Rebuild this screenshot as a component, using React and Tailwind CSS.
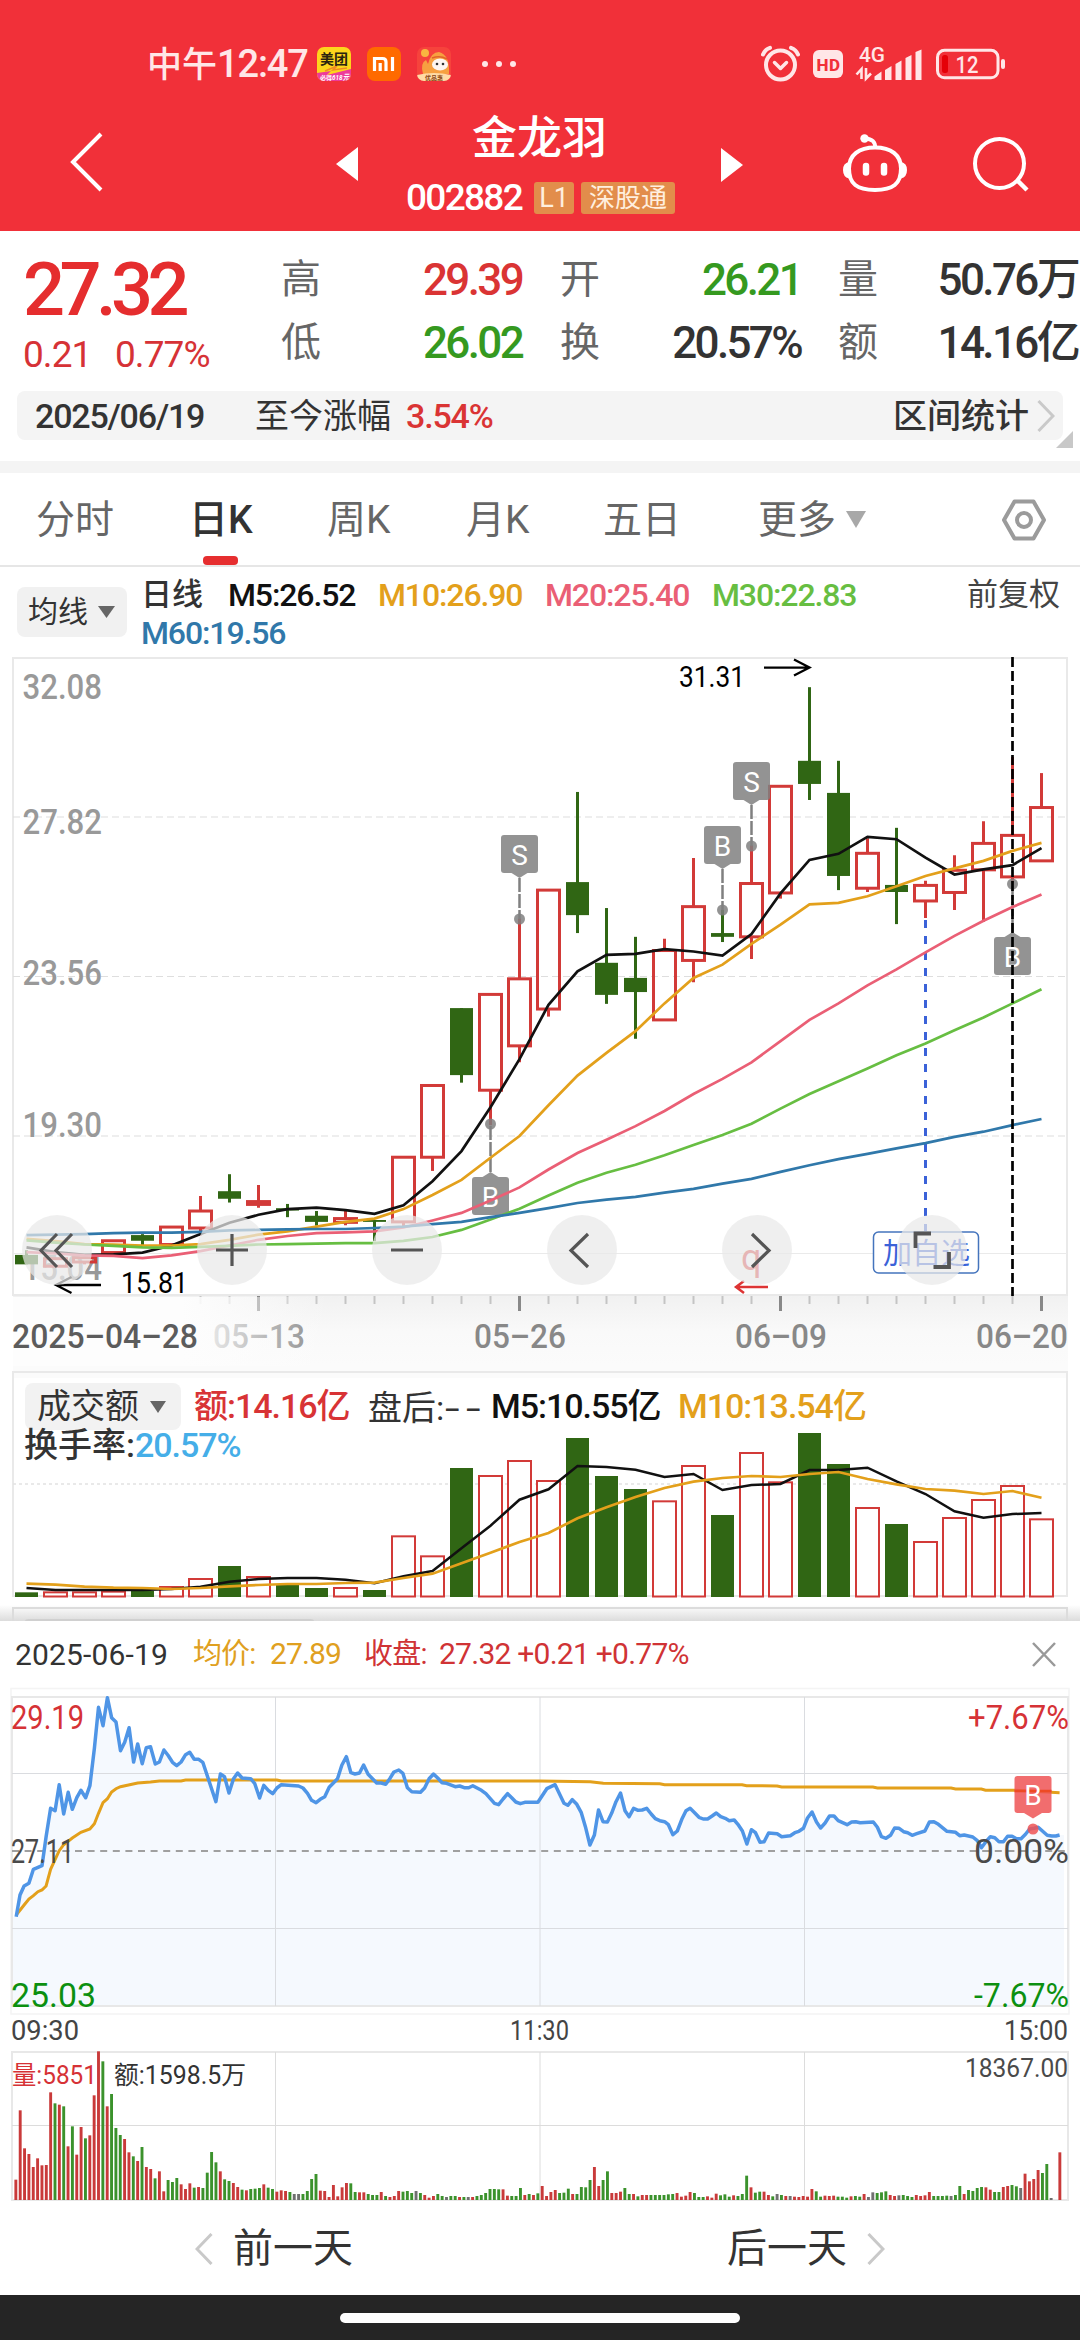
const FONT = "font-['Roboto','Noto_Sans_CJK_SC',sans-serif]";

// Daily candles: [colour, open/close top, bottom, high, low]
const candles = [
  ['g', 1303, 1323, 1293, 1323], ['r', 1311, 1327, 1311, 1327], ['r', 1309, 1318, 1309, 1323],
  ['r', 1273, 1298, 1273, 1298], ['g', 1261, 1273, 1259, 1283], ['r', 1244, 1281, 1244, 1281],
  ['r', 1210, 1246, 1178, 1262], ['g', 1168, 1184, 1132, 1192], ['r', 1190, 1196, 1155, 1203],
  ['g', 1204, 1209, 1195, 1223], ['g', 1220, 1233, 1210, 1241], ['r', 1226, 1234, 1210, 1240],
  ['g', 1229, 1233, 1229, 1274], ['r', 1096, 1233, 1096, 1243], ['r', 944, 1096, 944, 1125],
  ['g', 780, 922, 780, 938], ['r', 751, 954, 751, 1028], ['r', 718, 860, 590, 895],
  ['r', 530, 782, 530, 798], ['g', 513, 583, 322, 621], ['g', 684, 752, 568, 771],
  ['g', 716, 746, 629, 845], ['r', 658, 805, 633, 805], ['r', 565, 679, 462, 725],
  ['g', 621, 629, 572, 640], ['r', 516, 629, 435, 676], ['r', 310, 536, 310, 548],
  ['g', 256, 305, 100, 339], ['g', 324, 500, 256, 530], ['r', 452, 526, 420, 534],
  ['g', 519, 534, 398, 602], ['r', 520, 553, 510, 589], ['r', 488, 535, 456, 572],
  ['r', 431, 487, 384, 597], ['r', 414, 502, 248, 515], ['r', 355, 468, 282, 468],
];

const averages = [
  ['#111111', [1287, 1297, 1303, 1302, 1298, 1283, 1259, 1235, 1218, 1206, 1203, 1208, 1216, 1198, 1147, 1083, 990, 888, 773, 702, 667, 665, 655, 660, 669, 623, 537, 466, 453, 417, 422, 461, 497, 486, 477, 441]],
  ['#e3a01b', [1269, 1274, 1280, 1281, 1283, 1283, 1280, 1271, 1260, 1253, 1243, 1233, 1226, 1206, 1176, 1144, 1097, 1051, 986, 923, 875, 829, 770, 716, 688, 644, 603, 560, 557, 543, 522, 500, 484, 468, 447, 430]],
  ['#ea5f75', [1297, 1300, 1304, 1305, 1310, 1304, 1295, 1283, 1271, 1263, 1257, 1255, 1253, 1245, 1230, 1214, 1188, 1160, 1122, 1087, 1059, 1030, 998, 962, 930, 895, 850, 805, 770, 732, 698, 662, 627, 595, 566, 539]],
  ['#67be42', [1272, 1277, 1281, 1284, 1287, 1288, 1286, 1284, 1281, 1280, 1279, 1278, 1278, 1273, 1265, 1250, 1228, 1205, 1177, 1150, 1129, 1112, 1092, 1070, 1049, 1025, 993, 962, 935, 908, 880, 855, 827, 800, 770, 740]],
  ['#3078aa', [1261, 1260, 1259, 1257, 1256, 1256, 1254, 1251, 1250, 1249, 1248, 1248, 1246, 1243, 1238, 1233, 1223, 1214, 1204, 1193, 1186, 1180, 1171, 1163, 1152, 1142, 1127, 1113, 1100, 1089, 1077, 1066, 1053, 1042, 1028, 1015]],
];

const turnover = [697, 697, 697, 695, 693, 681, 657, 618, 651, 675, 684, 684, 690, 529, 589, 324, 348, 303, 363, 234, 348, 387, 424, 318, 465, 279, 367, 219, 312, 444, 492, 546, 474, 420, 378, 478];
const turnoverM5 = [684, 690, 690, 690, 690, 687, 680, 665, 657, 654, 654, 659, 670, 649, 633, 565, 497, 419, 388, 318, 321, 329, 351, 342, 390, 375, 372, 330, 330, 323, 364, 402, 454, 473, 462, 459];
const turnoverM10 = [671, 674, 680, 683, 684, 687, 684, 679, 675, 672, 672, 669, 668, 654, 641, 610, 578, 546, 519, 475, 442, 411, 384, 365, 354, 348, 351, 342, 336, 357, 373, 387, 392, 402, 393, 413];

const minutePrice = '47,920 58,855 70,828 84,820 97,778 122,767 134,680 147,595 160,602 172,524 185,612 198,547 210,598 223,563 235,541 249,563 261,527 274,415 286,292 299,347 312,263 324,323 337,336 350,422 362,397 375,353 388,456 400,402 413,461 425,413 437,410 451,462 463,456 476,420 488,436 501,457 513,467 526,456 539,434 551,427 564,448 577,448 589,457 627,575 640,492 652,500 665,549 678,506 690,489 703,504 728,506 740,521 754,564 766,526 779,541 792,551 804,534 817,524 867,528 880,534 893,550 905,571 918,578 930,568 943,560 956,532 980,506 993,465 1006,440 1019,488 1031,492 1044,489 1056,465 1069,493 1094,519 1107,519 1120,523 1132,506 1144,486 1158,480 1170,490 1183,533 1196,545 1221,547 1233,534 1246,506 1259,492 1271,504 1284,518 1297,520 1322,530 1335,528 1348,533 1361,533 1373,527 1398,541 1411,551 1436,580 1448,584 1461,567 1474,551 1486,563 1498,576 1511,581 1524,577 1562,577 1588,536 1612,524 1638,580 1649,586 1662,569 1675,583 1688,608 1700,650 1713,705 1726,675 1738,600 1751,635 1764,636 1776,610 1789,575 1802,549 1815,602 1827,620 1840,595 1853,601 1865,600 1878,595 1891,612 1903,626 1916,632 1930,635 1941,644 1954,674 1967,663 1980,628 1992,602 2004,595 2017,608 2030,622 2042,627 2055,627 2068,618 2080,609 2093,620 2106,625 2118,632 2132,630 2143,643 2156,663 2169,702 2182,659 2194,668 2207,697 2219,695 2232,669 2257,671 2270,680 2295,677 2308,668 2320,664 2333,655 2345,624 2358,606 2371,636 2383,654 2396,639 2409,618 2422,618 2434,632 2460,644 2473,636 2485,635 2498,638 2536,636 2548,652 2560,680 2573,685 2586,676 2598,654 2611,655 2624,665 2636,668 2649,676 2662,671 2686,663 2699,636 2712,635 2725,643 2750,664 2775,667 2787,677 2800,675 2825,681 2838,692 2850,713 2863,695 2876,680 2889,683 2901,695 2914,695 2926,679 2939,679 2952,686 2965,686 2978,673 2990,657 3003,655 3015,652 3028,664 3041,676 3054,678 3066,678 3077,675';
const minuteAverage = '47,915 70,885 84,867 97,857 110,845 122,840 134,828 147,778 172,722 185,704 210,684 235,667 261,657 274,641 286,610 299,578 312,566 324,546 337,536 350,530 400,519 437,516 463,513 526,513 539,510 804,510 817,513 1568,513 1714,515 1752,520 1916,521 1930,524 2155,524 2168,527 2257,528 2270,531 2535,531 2548,534 2762,534 2775,537 2850,537 2862,541 2950,541 3000,544 3077,548';

const minuteVolume = 'r479 r271 r385 r402 r441 r415 r436 r435 r217 g250 r254 g259 r379 g319 r404 r321 g355 r346 r226 r94 g124 r259 g222 g324 g345 r357 r397 g409 r423 g381 r441 r447 g475 r454 r514 g480 g486 g474 r493 r507 r490 g503 r501 g504 g458 g396 g427 r454 g478 g483 r489 r501 g509 r511 g507 g506 g504 r493 g503 g507 r515 r511 r513 g516 k522 k522 g522 g513 g477 g462 r512 r513 r531 r495 r529 r502 r489 g490 g516 r517 r517 g522 g525 g525 r516 g528 r531 r528 r513 g515 g513 g519 k513 g519 r525 r533 r528 g522 g528 k531 g528 g528 r531 g531 k531 r531 g528 g525 g519 g507 g507 g508 r508 r527 g528 g528 g504 r525 g522 r525 g520 r498 r528 r516 r510 g519 g518 g506 r522 g522 g501 g502 g480 r441 r498 g480 g454 r519 r519 r515 g504 g522 r522 g529 r525 r525 g525 g525 g525 g525 g523 g522 r519 r530 r527 r516 g519 g531 g531 r529 r533 r521 g526 g523 g530 r526 g528 g522 g467 r502 g518 g515 r515 r525 g529 k522 g525 r528 k528 r530 r531 r528 r530 r507 g514 g530 r527 r528 r527 g530 g530 g533 r529 g528 g530 r522 k531 k517 g519 g517 g514 r525 r528 k526 g525 g528 g531 r525 r528 r526 r516 g528 g528 g528 g527 k528 g525 g498 r522 g510 g513 g504 g501 r502 r509 g516 g516 r501 r498 g495 g499 k504 r461 r484 r477 r450 g459 g432 k534 k540 r397'.split(' ');

const dayX = (i) => 26.5 + i * 29;
const dayY = (v) => 640 + v / 2.119;
const volY = (v) => 1360 + v / 3;
const line = (values, toY) => values.map((v, i) => `${dayX(i)},${toY(v).toFixed(1)}`).join(' ');
const minuteLine = (text) =>
  text
    .split(' ')
    .map((p) => p.split(',').map(Number))
    .map(([x, y]) => `${(x / 2.904).toFixed(1)},${(1610 + y / 3).toFixed(1)}`)
    .join(' ');

const Caret = ({ className }) => (
  <svg viewBox="0 0 18 12" preserveAspectRatio="none" className={className}>
    <path d="M0 0H18L9 12Z" fill="currentColor" />
  </svg>
);

const Label = ({ x, y, w, size, fill, weight = 400, children }) => (
  <text x={x} y={y} textLength={w} lengthAdjust="spacingAndGlyphs" fontSize={size} fill={fill} fontWeight={weight}>
    {children}
  </text>
);

function StatusBar() {
  return (
    <div className="flex h-[100px] items-center pt-7 pl-[147px] text-[#ffe6e7]">
      <div className="w-[170px] whitespace-nowrap text-[35px] font-medium leading-none">
        中午<span className="text-[38px] tracking-[-0.03em]">12:47</span>
      </div>
      <svg viewBox="0 0 34 34" className="h-[34px] w-[34px]">
        <defs>
          <clipPath id="appMask"><rect width="34" height="34" rx="7" /></clipPath>
        </defs>
        <g clipPath="url(#appMask)">
          <rect width="34" height="34" fill="#fdd51c" />
          <path d="M0 26L14 24L10 28L34 22V34H0Z" fill="#ee3a9a" />
          <path d="M8 24L20 19L16 23L30 21" fill="none" stroke="#f08a24" strokeWidth="1.5" />
          <text x="3" y="16.5" fontSize="14" fontWeight="700" fill="#2b2410">美团</text>
          <text x="3" y="33" fontSize="6" fontWeight="700" fill="#fff">必得</text>
          <text x="15" y="33" fontSize="8" fontWeight="700" fontStyle="italic" fill="#fff" textLength="17" lengthAdjust="spacingAndGlyphs">618元</text>
        </g>
      </svg>
      <svg viewBox="0 0 34 34" className="ml-4 h-[34px] w-[34px]">
        <rect width="34" height="34" rx="8" fill="#ff6a00" />
        <path d="M7.5 24V11.5H15.5Q19 11.5 19 15V24M13.2 16V24M25.5 10V24" fill="none" stroke="#fff" strokeWidth="3.2" />
      </svg>
      <svg viewBox="0 0 34 34" className="ml-4 h-[34px] w-[34px]">
        <g clipPath="url(#appMask)">
          <rect width="34" height="34" fill="#f6433c" />
          <path d="M6 27Q3 16 9 13L11 17Q14 5 22 5Q33 8 32 27Z" fill="#f7a040" />
          <circle cx="8" cy="6" r="4" fill="#f9b640" />
          <path d="M15 11Q23 8 30 12" fill="none" stroke="#e2622a" strokeWidth="1.5" />
          <ellipse cx="23" cy="17.5" rx="8" ry="6" fill="#fdf6f2" />
          <circle cx="20" cy="17" r="1.3" fill="#333" />
          <circle cx="26" cy="17" r="1.3" fill="#333" />
          <path d="M0 28Q17 24 34 28V34H0Z" fill="#ffdba6" />
          <text x="8" y="32.5" fontSize="6" fontWeight="700" fill="#8c4a17">优品惠</text>
        </g>
      </svg>
      <div className="ml-[31px] flex gap-2">
        <i className="h-[6px] w-[6px] rounded-full bg-[#ffe6e7]" />
        <i className="h-[6px] w-[6px] rounded-full bg-[#ffe6e7]" />
        <i className="h-[6px] w-[6px] rounded-full bg-[#ffe6e7]" />
      </div>
      <svg viewBox="760 44 246 40" className="ml-[245px] h-10 w-[246px]" fill="none" stroke="#ffe6e7">
        <circle cx="779.5" cy="65" r="14.5" strokeWidth="4" />
        <path d="M773.5 62.5L779.5 68.5L785.5 62.5" strokeWidth="3.5" strokeLinejoin="round" strokeLinecap="round" />
        <path d="M762 54.5Q764 49.5 769 47.8M797 54.5Q795 49.5 790 47.8" strokeWidth="4" strokeLinecap="round" />
        <rect x="812" y="50" width="30" height="28" rx="6" fill="#ffe6e7" stroke="none" />
        <text x="815.5" y="70.5" fontSize="17" fontWeight="800" fill="#f13039" stroke="none" textLength="23.5">HD</text>
        <text x="858" y="62" fontSize="20" fontWeight="500" fill="#ffe6e7" stroke="none" textLength="26" lengthAdjust="spacingAndGlyphs">4G</text>
        <path d="M860.5 79V69L855.5 74.5M865 68V78.5L870 73.5" strokeWidth="2.6" />
        <path d="M873.5 80V76.5L880.5 71.5V80ZM884 80V70L890.5 66V80ZM894.5 80V64L900.5 60.5V80ZM904.5 80V58L910.5 55V80ZM914.5 80V52L920.5 49.5V80Z" fill="#ffe6e7" stroke="none" />
        <rect x="936.5" y="50.3" width="60.5" height="27.5" rx="7" strokeWidth="3" />
        <rect x="941" y="55" width="6" height="18" rx="2.5" fill="#e50008" stroke="none" />
        <rect x="1000" y="59" width="4" height="10" rx="2" fill="#ffe6e7" stroke="none" />
        <text x="954.5" y="73" fontSize="24" fontWeight="500" fill="#ffe6e7" stroke="none" textLength="23" lengthAdjust="spacingAndGlyphs">12</text>
      </svg>
    </div>
  );
}

function NavBar() {
  return (
    <div className="flex h-[131px] pl-[70px] text-white">
      <svg viewBox="0 0 33 60" className="mt-8 h-[60px] w-[33px]">
        <path d="M31 2L3 30L31 58" fill="none" stroke="#fff" strokeWidth="4" />
      </svg>
      <svg viewBox="0 0 22 34" className="mt-[47px] ml-[233px] h-[34px] w-[22px]">
        <path d="M22 0V34L0 17Z" fill="#fff" />
      </svg>
      <div className="flex w-[363px] flex-col items-center pt-[17px]">
        <h1 className="text-[45px] font-medium leading-[44px]">金龙羽</h1>
        <div className="mt-[21px] ml-[2px] flex h-8 items-center gap-[7px]">
          <span className="mr-[5px] text-[37px] font-medium leading-8 tracking-[-0.045em]">002882</span>
          <span className="h-8 w-10 rounded-[3px] bg-[#e28d4b] text-center text-[27px] leading-8 text-[#ffefdf]">L1</span>
          <span className="h-8 w-[94px] rounded-[3px] bg-[#e28d4b] text-center text-[26px] leading-8 text-[#ffefdf]">深股通</span>
        </div>
      </div>
      <svg viewBox="0 0 22 34" className="mt-[48px] h-[34px] w-[22px]">
        <path d="M0 0V34L22 17Z" fill="#fff" />
      </svg>
      <svg viewBox="0 0 64 60" className="mt-[34px] ml-[100px] h-[60px] w-16" fill="none" stroke="#fff" strokeWidth="4">
        <path d="M32 13.5C48 13.5 58 21 58 34.5C58 50 50 56 32 56C14 56 6 50 6 34.5C6 21 16 13.5 32 13.5Z" />
        <path d="M32 14Q33 5 22 4.5" />
        <circle cx="21.5" cy="4.5" r="4.2" fill="#fff" stroke="none" />
        <path d="M6 28Q0 29 0 36T6 44.5ZM58 28Q64 29 64 36T58 44.5Z" fill="#fff" stroke="none" />
        <path d="M23 32V38.5M41 32V38.5" strokeWidth="6.5" strokeLinecap="round" />
      </svg>
      <svg viewBox="0 0 56 56" className="mt-[37px] ml-[66px] h-14 w-14" fill="none" stroke="#fff" strokeWidth="4">
        <circle cx="26.5" cy="26.5" r="24.5" />
        <path d="M44 43L54 53" strokeWidth="4.5" />
      </svg>
    </div>
  );
}

const Quote = ({ label, value, color, width }) => (
  <div className={`flex h-[63px] items-center justify-between whitespace-nowrap ${width}`}>
    <span className="text-[40px] text-[#666]">{label}</span>
    <span className={`text-[44px] font-medium tracking-[-0.06em] ${color}`}>{value}</span>
  </div>
);

function QuotePanel() {
  return (
    <div className="h-[230px] pt-[17px]">
      <div className="flex h-[143px]">
        <div className="w-[281px] pl-[23px]">
          <div className="h-[84px] text-[74px] font-medium leading-[84px] tracking-[-0.075em] text-[#e52d2e]">27.32</div>
          <div className="flex text-[37px] leading-[45px] tracking-[-0.025em] text-[#d63236]">
            <span className="w-[92px]">0.21</span>
            <span>0.77%</span>
          </div>
        </div>
        <div className="flex gap-[37px]">
          <div>
            <Quote label="高" value="29.39" color="text-[#da3434]" width="w-[241px]" />
            <Quote label="低" value="26.02" color="text-[#35991f]" width="w-[241px]" />
          </div>
          <div className="ml-px">
            <Quote label="开" value="26.21" color="text-[#35991f]" width="w-[241px]" />
            <Quote label="换" value="20.57%" color="text-[#333]" width="w-[241px]" />
          </div>
          <div>
            <Quote label="量" value="50.76万" color="text-[#333]" width="w-[240px]" />
            <Quote label="额" value="14.16亿" color="text-[#333]" width="w-[240px]" />
          </div>
        </div>
      </div>
      <div className="relative mx-[17px] flex h-[49px] items-center rounded-lg bg-[#f4f4f4] pr-2 pl-[18px] text-[34px] leading-none text-[#333]">
        <span className="w-[220px] font-medium tracking-[-0.035em]">2025/06/19</span>
        <span className="w-[151px]">至今涨幅</span>
        <span className="font-medium tracking-[-0.035em] text-[#da3434]">3.54%</span>
        <span className="ml-auto font-medium">区间统计</span>
        <svg viewBox="0 0 18 34" className="ml-2 h-[34px] w-[18px]">
          <path d="M1.5 2L16 17L1.5 32" fill="none" stroke="#c9c9c9" strokeWidth="3" />
        </svg>
        <svg viewBox="0 0 17 17" className="absolute top-10 -right-[10px] h-[17px] w-[17px]">
          <path d="M17 0V17H0Z" fill="#c8c8c8" />
        </svg>
      </div>
    </div>
  );
}

function Tabs() {
  return (
    <div className="flex h-[106px] border-t-[12px] border-b-2 border-t-[#f4f4f4] border-b-[#e6e6e6] pl-9 text-[39px] leading-[94px] text-[#666]">
      <span className="w-[153px]">分时</span>
      <span className="relative w-[138px] font-medium text-[#333]">
        日K
        <i className="absolute bottom-0 left-[14px] h-[9px] w-[35px] rounded-[4px] bg-[#e62e2f]" />
      </span>
      <span className="w-[139px]">周K</span>
      <span className="w-[137px]">月K</span>
      <span className="w-[155px]">五日</span>
      <span className="w-[88px]">更多</span>
      <Caret className="mt-[38px] h-[17px] w-5 text-[#a8a8a8]" />
      <svg viewBox="0 0 46 42" className="mt-[26px] ml-[135px] h-[42px] w-[46px]" fill="none" stroke="#9b9b9b" strokeWidth="4">
        <path d="M13.5 2.500H32.500L43 21L32.500 39.500H13.500L3 21Z" strokeLinejoin="round" />
        <circle cx="23" cy="21" r="7" />
      </svg>
    </div>
  );
}

function AverageLegend() {
  return (
    <div className="flex h-[84px] pt-[9px] pl-[17px] text-[32px] font-medium leading-[38px] text-[#333]">
      <div className="mt-[11px] flex h-[50px] w-[110px] items-center rounded-lg bg-[#f1f1f1] pl-[11px] text-[30px] font-normal">
        均线
        <Caret className="ml-[10px] h-3 w-[17px] text-[#666]" />
      </div>
      <div className="ml-[14px] w-[826px] whitespace-nowrap tracking-[-0.035em]">
        <div className="flex">
          <span className="w-[87px] text-[31px] tracking-normal">日线</span>
          <span className="w-[150px] text-[#111]">M5:26.52</span>
          <span className="w-[167px] text-[#e3a01b]">M10:26.90</span>
          <span className="w-[167px] text-[#ea5f75]">M20:25.40</span>
          <span className="text-[#67be42]">M30:22.83</span>
        </div>
        <div className="text-[#3078aa]">M60:19.56</div>
      </div>
      <span className="text-[31px] font-normal text-[#444]">前复权</span>
    </div>
  );
}

// Trade flag with a leader line down (or up) to the candle it belongs to
const TradeFlag = ({ i, boxY, dotY, text }) => {
  const x = dayX(i);
  const below = boxY > dotY;
  const tip = below ? boxY - 5 : boxY + 43;
  const base = below ? boxY : boxY + 38;
  return (
    <g fill="#808080" fillOpacity=".85">
      <path d={`M${x} ${tip}V${dotY}`} stroke="#808080" strokeWidth="2.5" strokeDasharray="14 2" />
      <circle cx={x} cy={dotY} r="5.5" />
      <rect x={x - 18.5} y={boxY} width="37" height="38" rx="3" />
      <path d={`M${x - 8} ${base}H${x + 8}L${x} ${tip}Z`} />
      <text x={x} y={boxY + 29.5} fontSize="28" fill="#fff" fillOpacity="1" textAnchor="middle">{text}</text>
    </g>
  );
};

function DailyChart() {
  return (
    <svg viewBox="0 651 1080 715" className="h-[715px] w-[1080px]">
      <defs>
        <linearGradient id="axisFade" x1="0" x2="1" y1="0" y2="0">
          <stop offset=".16" stopColor="#fdfdfd" />
          <stop offset=".3" stopColor="#fdfdfd" stopOpacity="0" />
        </linearGradient>
        <linearGradient id="axisBack" x1="0" x2="0" y1="0" y2="1">
          <stop offset="0" stopColor="#f1f1f1" />
          <stop offset=".5" stopColor="#f9f9f9" />
          <stop offset="1" stopColor="#fbfbfb" />
        </linearGradient>
      </defs>
      <rect x="13" y="1296" width="1055" height="70" fill="url(#axisBack)" />
      <rect x="13" y="658" width="1054" height="637" fill="#fff" stroke="#e9e9e9" strokeWidth="2" />
      <path d="M13 817H1067M13 976.5H1067M13 1136H1067" stroke="#dedede" strokeWidth="1.2" strokeDasharray="7 4" />
      <path d="M13 1253.5H1067" stroke="#eaeaea" strokeWidth="1.2" />

      <Label x="22.5" y="699" w="79.500" size="35" weight="500" fill="#999">32.08</Label>
      <Label x="22.5" y="834" w="79.500" size="35" weight="500" fill="#999">27.82</Label>
      <Label x="22.5" y="985" w="79.500" size="35" weight="500" fill="#999">23.56</Label>
      <Label x="22.5" y="1137" w="79.500" size="35" weight="500" fill="#999">19.30</Label>
      <Label x="22.5" y="1280" w="79.500" size="35" weight="500" fill="#999">15.04</Label>

      {candles.map(([kind, top, bottom, high, low], i) => {
        const x = dayX(i);
        const [t, b, h, l] = [top, bottom, high, low].map(dayY);
        return kind === 'g' ? (
          <g key={i} fill="#306614">
            <rect x={x - 1.5} y={h} width="3" height={l - h} />
            <rect x={x - 11.5} y={t} width="23" height={b - t} />
          </g>
        ) : (
          <g key={i} fill="none" stroke="#d23a38" strokeWidth="3">
            <path d={`M${x} ${h}V${t}M${x} ${b}V${l}`} />
            <rect x={x - 11} y={t} width="22" height={b - t} />
          </g>
        );
      })}

      <TradeFlag i={17} boxY={835} dotY={919} text="S" />
      <TradeFlag i={16} boxY={1177} dotY={1124} text="B" />
      <TradeFlag i={24} boxY={826} dotY={910} text="B" />
      <TradeFlag i={25} boxY={762} dotY={846} text="S" />
      <TradeFlag i={34} boxY={937} dotY={884} text="B" />

      <path d="M925.5 920V1231" stroke="#3b62d8" strokeWidth="3" strokeDasharray="8 8" />
      {averages.map(([color, values]) => (
        <polyline key={color} points={line(values, dayY)} fill="none" stroke={color} strokeWidth="2.7" />
      ))}
      <path d="M1012.5 657V1296" stroke="#000" strokeWidth="2.700" strokeDasharray="10 4" />

      <g fill="none" stroke="#000" strokeWidth="2.300">
        <path d="M764 667.6H809M794 659.5L809.5 667.6L794 675.5" />
        <path d="M101 1285H57M71.5 1277L56 1285L71.5 1293" />
      </g>
      <Label x="679" y="687" w="66" size="30" fill="#000">31.31</Label>
      <Label x="121" y="1293" w="67" size="30" fill="#000">15.81</Label>

      <rect x="873.5" y="1232" width="105" height="41" rx="5" fill="#fff" stroke="#4474bd" strokeWidth="1.5" />
      <text x="883" y="1264" fontSize="29" fill="#3b62d8">加自选</text>
      <text x="741" y="1270" fontSize="36" fill="#dd3434">q</text>
      <path d="M768 1287H737M744 1281L736 1287L744 1293" fill="none" stroke="#dd3434" strokeWidth="2.5" />

      {[57, 232, 407, 582, 757, 932].map((x) => (
        <circle key={x} cx={x} cy="1250" r="35" fill="#e9e9e9" fillOpacity=".72" />
      ))}
      <g fill="none" stroke="#555" strokeWidth="3.200">
        <path d="M57 1234L41 1250.5L57 1267M72 1234L56 1250.5L72 1267" />
        <path d="M216 1250H248M232 1234V1266M391 1250H423" />
        <path d="M588 1234L571 1250.5L588 1267M752 1234L769 1250.5L752 1267" />
        <path d="M915.5 1248V1233.5H931M933.5 1267H949V1252" strokeWidth="3.800" />
      </g>

      {candles.map((_, i) => {
        if (i < 6) return null;
        const major = i % 9 === 8;
        return <path key={i} d={`M${dayX(i)} 1296V${major ? 1311 : 1304}`} stroke={major ? '#888' : '#c4c4c4'} strokeWidth={major ? 3 : 2} />;
      })}
      <Label x="213" y="1348" w="92" size="34" weight="500" fill="#888">05–13</Label>
      <rect x="13" y="1297" width="1054" height="69" fill="url(#axisFade)" />
      <Label x="12" y="1348" w="186" size="34" weight="500" fill="#5c5c5c">2025–04–28</Label>
      <Label x="474" y="1348" w="92" size="34" weight="500" fill="#888">05–26</Label>
      <Label x="735" y="1348" w="92" size="34" weight="500" fill="#888">06–09</Label>
      <Label x="976" y="1348" w="92" size="34" weight="500" fill="#888">06–20</Label>
    </svg>
  );
}

function TurnoverPanel() {
  return (
    <div className="relative h-[255px] whitespace-nowrap text-[34px] font-medium leading-[39px] text-[#333]">
      <svg viewBox="0 1366 1080 255" className="absolute inset-0 h-[255px] w-[1080px]">
        <defs>
          <linearGradient id="sheetShadow" x1="0" x2="0" y1="0" y2="1">
            <stop offset="0" stopColor="#fff" />
            <stop offset="1" stopColor="#dcdcdc" />
          </linearGradient>
        </defs>
        <rect x="13" y="1366" width="1055" height="12" fill="#fbfbfb" />
        <rect x="13" y="1372" width="1054" height="224" fill="none" stroke="#e9e9e9" strokeWidth="2" />
        <path d="M13 1484H1067" stroke="#e2e2e2" strokeWidth="1.5" strokeDasharray="3 3" />
        {turnover.map((v, i) =>
          candles[i][0] === 'g' ? (
            <rect key={i} x={dayX(i) - 11.5} y={volY(v)} width="23" height={1597 - volY(v)} fill="#306614" />
          ) : (
            <rect key={i} x={dayX(i) - 11.5} y={volY(v)} width="23" height={1596.5 - volY(v)} fill="#fff" stroke="#d23a38" strokeWidth="2" />
          )
        )}
        <polyline points={line(turnoverM5, volY)} fill="none" stroke="#111" strokeWidth="2.5" />
        <polyline points={line(turnoverM10, volY)} fill="none" stroke="#e3a01b" strokeWidth="2.7" />
        <rect x="0" y="1605" width="1080" height="16" fill="url(#sheetShadow)" />
        <path d="M13 1621V1608H1067V1621" fill="none" stroke="#dcdcdc" strokeWidth="2" />
        <path d="M25 1621Q25 1619 29 1619H310Q314 1619 314 1621Z" fill="#d0d0d0" />
      </svg>
      <div className="relative flex pt-[17px] pl-[25px]">
        <div className="flex h-[47px] w-[156px] items-center rounded-lg bg-[#f2f2f2] pl-3 font-normal">
          成交额
          <Caret className="ml-[11px] h-3 w-4 text-[#666]" />
        </div>
        <div className="flex pt-1 tracking-[-0.03em]">
          <span className="ml-[13px] w-[174px] text-[#d83335]">额:14.16亿</span>
          <span className="flex w-[123px] items-center font-normal tracking-normal">
            盘后:<span className="ml-px inline-block origin-left scale-x-[1.55] tracking-[0.12em]">--</span>
          </span>
          <span className="w-[187px] text-[#111]">M5:10.55亿</span>
          <span className="text-[#e3a01b]">M10:13.54亿</span>
        </div>
      </div>
      <div className="relative -mt-[4px] pl-[24px]">
        换手率:<span className="tracking-[-0.03em] text-[#45aee8]">20.57%</span>
      </div>
    </div>
  );
}

const volumeColor = { r: '#c93a3a', g: '#3b922c', k: '#707070' };

function MinuteChart() {
  const price = minuteLine(minutePrice);
  return (
    <svg viewBox="0 1686 1080 516" className="h-[516px] w-[1080px]">
      <path d="M11 1688.5H1069V2014H11Z" fill="none" stroke="#f4f4f4" strokeWidth="1.5" />
      <polygon points={`${price} 1064,1835 1064,2005 13,2005 13,1917`} fill="#f5f9fe" />
      <path d="M12 1697H1068V2006H12Z" fill="none" stroke="#e8e8e8" strokeWidth="2" />
      <path d="M12 1773.5H1068M12 1928.5H1068M275.5 1697V2006M540 1697V2006M804.5 1697V2006" stroke="#dadce0" strokeWidth="1" />
      <path d="M12 1851H1068" stroke="#a0a0a0" strokeWidth="1.800" strokeDasharray="7 5.600" />
      <polyline points={minuteLine(minuteAverage)} fill="none" stroke="#e3a01b" strokeWidth="3" />
      <polyline points={price} fill="none" stroke="#4f95e6" strokeWidth="3.500" strokeLinejoin="round" />

      <Label x="11" y="1729" w="73" size="33" fill="#d63236">29.19</Label>
      <Label x="11" y="1863" w="63" size="33" fill="#4a4a4a">27.11</Label>
      <Label x="11" y="2007" w="85" size="33" fill="#0c9010">25.03</Label>
      <Label x="968" y="1729" w="101" size="33" fill="#d63236">+7.67%</Label>
      <Label x="974" y="1863" w="95" size="33" fill="#4a4a4a">0.00%</Label>
      <Label x="974" y="2007" w="95" size="33" fill="#0c9010">-7.67%</Label>

      <g fill="#ee5455" fillOpacity=".85">
        <rect x="1014.5" y="1776" width="37" height="37" rx="3" />
        <path d="M1024 1813H1042L1033 1818.500Z" />
        <circle cx="1033" cy="1829" r="5.5" />
        <path d="M1014.5 1791H1051.500" stroke="#ee4a24" strokeWidth="2.5" />
        <text x="1033" y="1804.5" fontSize="28" fill="#fff" fillOpacity="1" textAnchor="middle">B</text>
      </g>

      <Label x="11" y="2040" w="68" size="27" fill="#444">09:30</Label>
      <Label x="510" y="2040" w="59" size="27" fill="#444">11:30</Label>
      <Label x="1004" y="2040" w="64" size="27" fill="#444">15:00</Label>

      <path d="M12 2200V2052H1068V2200Z" fill="none" stroke="#e8e8e8" strokeWidth="2" />
      <path d="M12 2125.5H1068M275.5 2052V2200M540 2052V2200M804.5 2052V2200" stroke="#dcdcdc" strokeWidth="1" />
      {minuteVolume.map((bar, i) => {
        const h = (540 - Number(bar.slice(1))) / 3;
        return <rect key={i} x={14.4 + i * 4.35} y={2200 - h} width="2.900" height={h} fill={volumeColor[bar[0]]} />;
      })}
      <Label x="12" y="2084" w="85" size="25" fill="#d63236">量:5851</Label>
      <Label x="114" y="2084" w="132" size="25" fill="#333">额:1598.5万</Label>
      <Label x="965" y="2077" w="103" size="26" fill="#4a4a4a">18367.00</Label>
    </svg>
  );
}

function DaySheet() {
  return (
    <div className="h-[674px] bg-white">
      <div className="flex h-[65px] items-center whitespace-nowrap pt-px pl-[15px] text-[30px] text-[#333]">
        <span className="w-[178px] tracking-[0.005em]">2025-06-19</span>
        <span className="w-[171px] tracking-[-0.03em] text-[#e0a020]"><span className="inline-block w-[77px] text-[29px]">均价:</span>27.89</span>
        <span className="w-[672px] tracking-[-0.025em] text-[#d03335]">
          <span className="inline-block w-[75px] text-[29px]">收盘:</span>27.32 +0.21 +0.77%
        </span>
        <svg viewBox="0 0 24 25" className="-ml-[4px] h-[25px] w-6">
          <path d="M1 1L23 24M23 1L1 24" stroke="#999" strokeWidth="2.5" />
        </svg>
      </div>
      <MinuteChart />
      <div className="flex h-[93px] items-center text-[40px] leading-none text-[#333]">
        <svg viewBox="0 0 18 32" className="ml-[195px] h-8 w-[18px]">
          <path d="M16.5 1L2 16L16.5 31" fill="none" stroke="#c9c9c9" strokeWidth="3" />
        </svg>
        <span className="ml-5 w-[494px]">前一天</span>
        <span className="w-[120px]">后一天</span>
        <svg viewBox="0 0 18 32" className="ml-5 h-8 w-[18px]">
          <path d="M1.5 1L16 16L1.5 31" fill="none" stroke="#c9c9c9" strokeWidth="3" />
        </svg>
      </div>
    </div>
  );
}

export default function App() {
  return (
    <div className={`h-[2340px] w-[1080px] overflow-hidden bg-white ${FONT} [&_svg]:block [&_svg]:shrink-0 [&_span]:shrink-0`}>
      <header className="bg-[#f13039]">
        <StatusBar />
        <NavBar />
      </header>
      <QuotePanel />
      <Tabs />
      <AverageLegend />
      <DailyChart />
      <TurnoverPanel />
      <DaySheet />
      <footer className="flex h-[45px] justify-center bg-[#252525] pt-[18px]">
        <div className="h-[10px] w-[400px] rounded-full bg-white" />
      </footer>
    </div>
  );
}
